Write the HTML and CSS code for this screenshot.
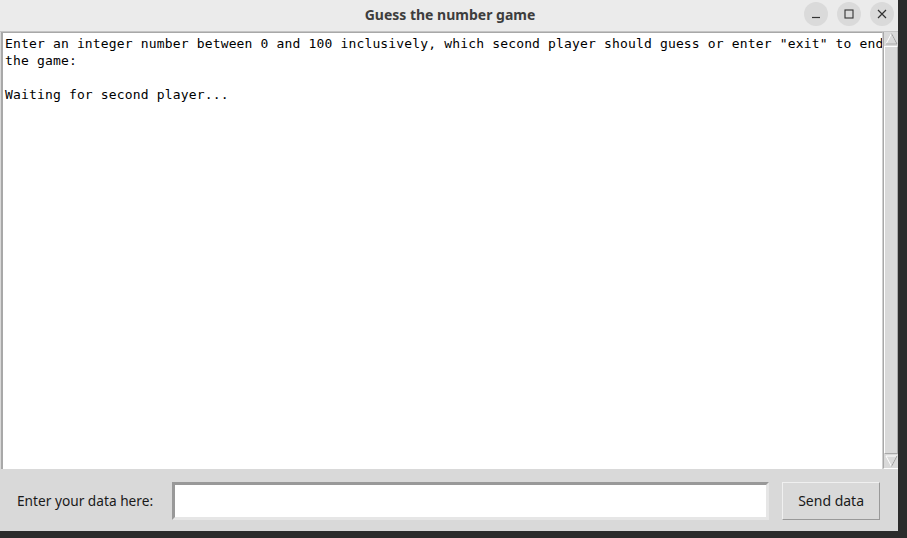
FILE: index.html
```html
<!DOCTYPE html>
<html>
<head>
<meta charset="utf-8">
<link rel="stylesheet" href="styles.css">
</head>
<body>
<div class="window">
  <div class="titlebar">
    <div class="title">Guess the number game</div>
    <div class="controls">
      <div class="wbtn"><svg width="10" height="10" viewBox="0 0 10 10"><path d="M1 8.5h8" stroke="#333" stroke-width="1.2"/></svg></div>
      <div class="wbtn"><svg width="10" height="10" viewBox="0 0 10 10"><rect x="1" y="1" width="8" height="8" fill="none" stroke="#333" stroke-width="1.1"/></svg></div>
      <div class="wbtn"><svg width="10" height="10" viewBox="0 0 10 10"><path d="M1 1l8 8M9 1l-8 8" stroke="#333" stroke-width="1.2"/></svg></div>
    </div>
  </div>
  <div class="body">
    <div class="textarea-row">
      <div class="text">Enter an integer number between 0 and 100 inclusively, which second player should guess or enter "exit" to end
the game:

Waiting for second player...</div>
      <div class="scrollbar">
        <div class="arrow"><svg width="13" height="13" viewBox="0 0 13 13"><path d="M6.5 1.5L12 12H1z" fill="#d9d9d9" stroke="#fff" stroke-width="1"/><path d="M12 12H1" stroke="#999" stroke-width="1"/><path d="M6.5 1.5L12 12" stroke="#999" stroke-width="1"/></svg></div>
        <div class="trough"></div>
        <div class="arrow"><svg width="13" height="13" viewBox="0 0 13 13"><path d="M6.5 11.5L12 1H1z" fill="#d9d9d9" stroke="#fff" stroke-width="1"/><path d="M6.5 11.5L12 1" stroke="#999" stroke-width="1"/></svg></div>
      </div>
    </div>
    <div class="bottom">
      <span class="label">Enter your data here:</span>
      <div class="entry"></div>
      <div class="button">Send data</div>
    </div>
  </div>
</div>
</body>
</html>
```
FILE: styles.css
```css
html, body {
  margin: 0;
  padding: 0;
}
body {
  background: #2b2b2b;
  width: 907px;
  height: 538px;
  overflow: hidden;
}
.window {
  width: 898px;
  height: 531px;
  background: #d9d9d9;
  display: flex;
  flex-direction: column;
}
.titlebar {
  height: 31px;
  background: #ebebeb;
  border-bottom: 1px solid #c4c4c4;
  display: flex;
  align-items: center;
  justify-content: center;
  position: relative;
  flex-shrink: 0;
}
.title {
  font-family: "Noto Sans", "DejaVu Sans", sans-serif;
  font-weight: bold;
  font-size: 14px;
  color: #3d3d3d;
  margin-top: -3px;
  margin-left: 2px;
}
.controls {
  position: absolute;
  right: 4px;
  top: 2px;
  display: flex;
  gap: 9px;
}
.wbtn {
  width: 24px;
  height: 24px;
  border-radius: 50%;
  background: #dadada;
  display: flex;
  align-items: center;
  justify-content: center;
}
.body {
  flex: 1;
  display: flex;
  flex-direction: column;
  padding-left: 1px;
}
.textarea-row {
  height: 437px;
  display: flex;
}
.text {
  flex: 1;
  background: #fff;
  border-left: 2px solid #a8a8a8;
  border-top: 1px solid #a8a8a8;
  border-right: 1px solid #d0d0d0;
  font-family: "DejaVu Sans Mono", monospace;
  font-size: 13px;
  letter-spacing: 0.16px;
  line-height: 17px;
  color: #000;
  white-space: pre;
  padding: 2px 0 0 2px;
  overflow: hidden;
}
.scrollbar {
  width: 14px;
  background: #d9d9d9;
  border-left: 1px solid #a8a8a8;
  display: flex;
  flex-direction: column;
  border-bottom: 1px solid #fff;
}
.arrow {
  height: 13px;
  display: flex;
  justify-content: center;
}
.trough {
  flex: 1;
  margin: 1px 0;
  border: 1px solid #a8a8a8;
  border-left-color: #fff;
  border-top-color: #fff;
  background: #d9d9d9;
}
.bottom {
  flex: 1;
  display: flex;
  align-items: center;
  padding-left: 16px;
  padding-top: 1px;
}
.label {
  font-family: "Noto Sans", "DejaVu Sans", sans-serif;
  font-size: 13.7px;
  color: #1a1a1a;
  margin-right: 19px;
}
.entry {
  width: 597px;
  height: 38px;
  box-sizing: border-box;
  background: #fff;
  border-top: 3px solid #999;
  border-left: 3px solid #999;
  border-right: 3px solid #e6e6e6;
  border-bottom: 3px solid #e6e6e6;
  margin-right: 13px;
}
.button {
  width: 98px;
  height: 38px;
  box-sizing: border-box;
  border: 1px solid #999;
  border-left-color: #f0f0f0;
  border-top-color: #f0f0f0;
  display: flex;
  align-items: center;
  justify-content: center;
  font-family: "Noto Sans", "DejaVu Sans", sans-serif;
  font-size: 14px;
  color: #1a1a1a;
}
```
